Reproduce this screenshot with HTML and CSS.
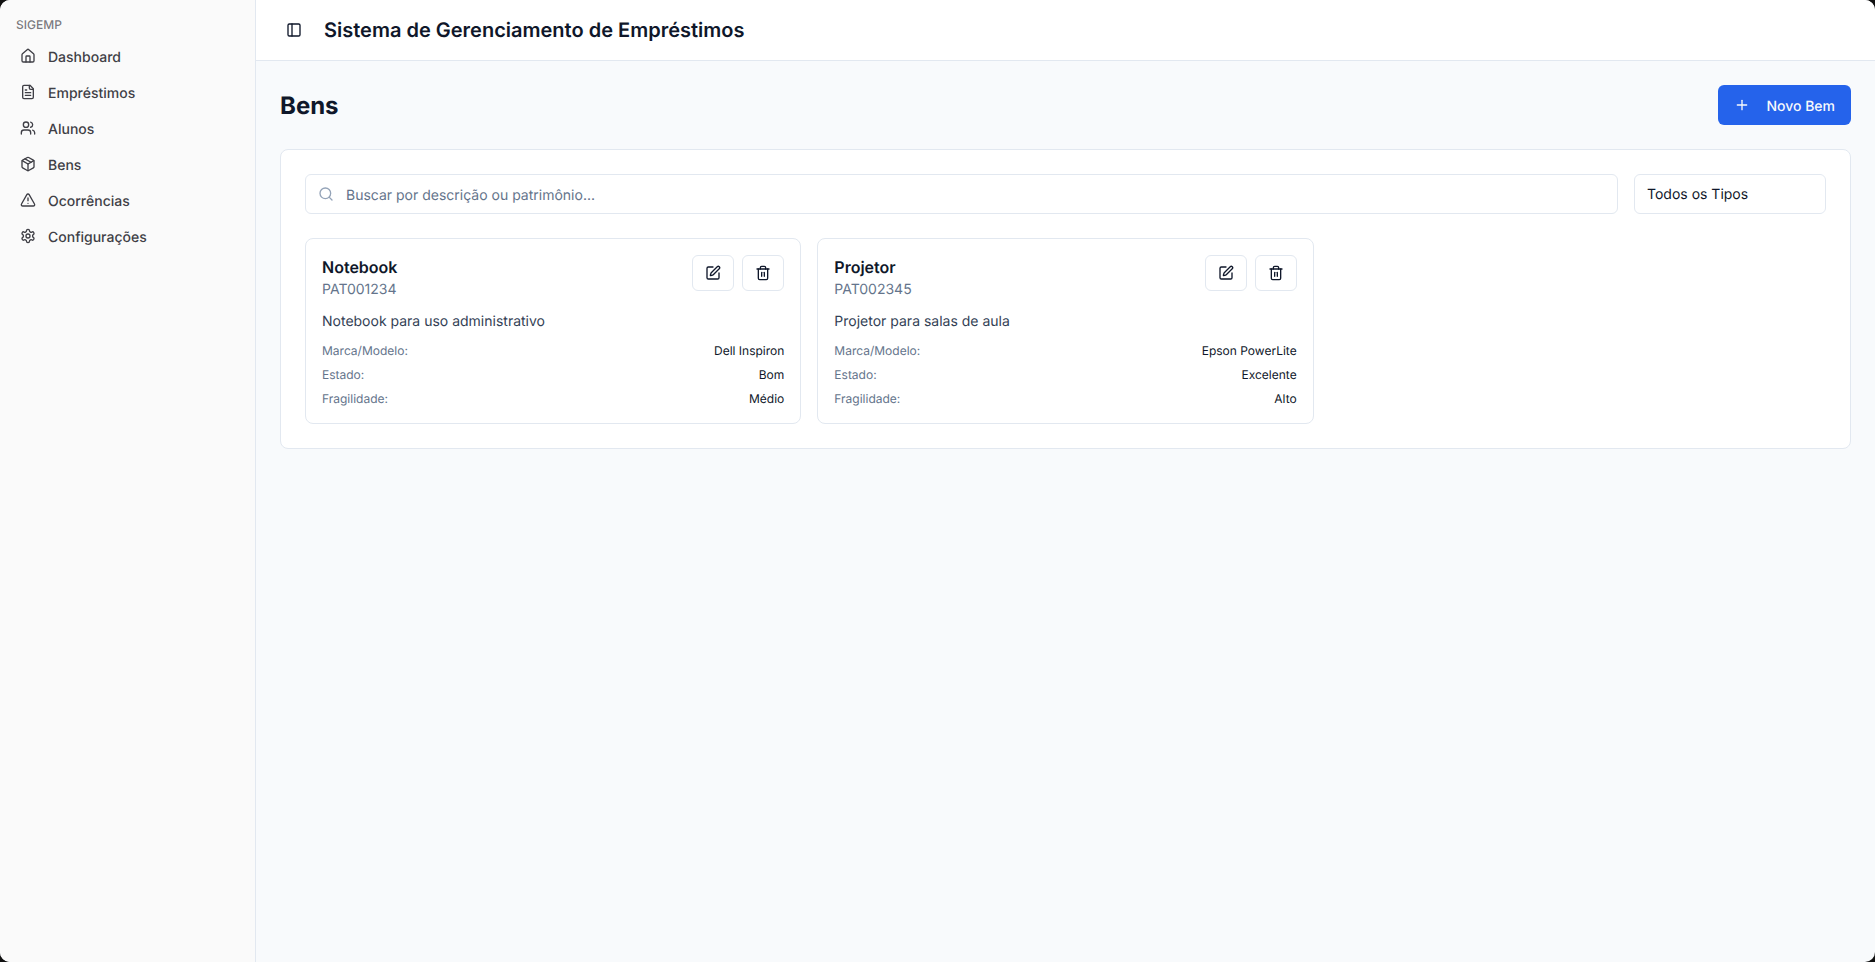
FILE: index.html
```html
<!DOCTYPE html>
<html lang="pt-BR">
<head>
    <meta charset="UTF-8">
    <title>SIGEMP</title>
    <link rel="stylesheet" href="styles.css">
</head>
<body>
    <div class="app">
        <!-- menu lateral -->
        <aside class="sidebar">
            <div class="brand">SIGEMP</div>
            <ul class="menu">
                <li>
                    <svg class="icon" viewBox="0 0 24 24"><path d="M15 21v-8a1 1 0 0 0-1-1h-4a1 1 0 0 0-1 1v8"/><path d="M3 10a2 2 0 0 1 .709-1.528l7-5.999a2 2 0 0 1 2.582 0l7 5.999A2 2 0 0 1 21 10v9a2 2 0 0 1-2 2H5a2 2 0 0 1-2-2z"/></svg>
                    <span>Dashboard</span>
                </li>
                <li>
                    <svg class="icon" viewBox="0 0 24 24"><path d="M15 2H6a2 2 0 0 0-2 2v16a2 2 0 0 0 2 2h12a2 2 0 0 0 2-2V7Z"/><path d="M14 2v4a2 2 0 0 0 2 2h4"/><path d="M10 9H8"/><path d="M16 13H8"/><path d="M16 17H8"/></svg>
                    <span>Empréstimos</span>
                </li>
                <li>
                    <svg class="icon" viewBox="0 0 24 24"><path d="M16 21v-2a4 4 0 0 0-4-4H6a4 4 0 0 0-4 4v2"/><circle cx="9" cy="7" r="4"/><path d="M22 21v-2a4 4 0 0 0-3-3.87"/><path d="M16 3.13a4 4 0 0 1 0 7.75"/></svg>
                    <span>Alunos</span>
                </li>
                <li>
                    <svg class="icon" viewBox="0 0 24 24"><path d="M21 8a2 2 0 0 0-1-1.73l-7-4a2 2 0 0 0-2 0l-7 4A2 2 0 0 0 3 8v8a2 2 0 0 0 1 1.73l7 4a2 2 0 0 0 2 0l7-4A2 2 0 0 0 21 16Z"/><path d="m3.3 7 8.7 5 8.7-5"/><path d="M12 22V12"/><path d="m7.5 4.27 9 5.15"/></svg>
                    <span>Bens</span>
                </li>
                <li>
                    <svg class="icon" viewBox="0 0 24 24"><path d="m21.73 18-8-14a2 2 0 0 0-3.48 0l-8 14A2 2 0 0 0 4 21h16a2 2 0 0 0 1.73-3"/><path d="M12 9v4"/><path d="M12 17h.01"/></svg>
                    <span>Ocorrências</span>
                </li>
                <li>
                    <svg class="icon" viewBox="0 0 24 24"><path d="M12.22 2h-.44a2 2 0 0 0-2 2v.18a2 2 0 0 1-1 1.73l-.43.25a2 2 0 0 1-2 0l-.15-.08a2 2 0 0 0-2.73.73l-.22.38a2 2 0 0 0 .73 2.73l.15.1a2 2 0 0 1 1 1.72v.51a2 2 0 0 1-1 1.74l-.15.09a2 2 0 0 0-.73 2.73l.22.38a2 2 0 0 0 2.73.73l.15-.08a2 2 0 0 1 2 0l.43.25a2 2 0 0 1 1 1.73V20a2 2 0 0 0 2 2h.44a2 2 0 0 0 2-2v-.18a2 2 0 0 1 1-1.73l.43-.25a2 2 0 0 1 2 0l.15.08a2 2 0 0 0 2.73-.73l.22-.39a2 2 0 0 0-.73-2.73l-.15-.08a2 2 0 0 1-1-1.74v-.5a2 2 0 0 1 1-1.74l.15-.09a2 2 0 0 0 .73-2.73l-.22-.38a2 2 0 0 0-2.73-.73l-.15.08a2 2 0 0 1-2 0l-.43-.25a2 2 0 0 1-1-1.73V4a2 2 0 0 0-2-2z"/><circle cx="12" cy="12" r="3"/></svg>
                    <span>Configurações</span>
                </li>
            </ul>
        </aside>

        <div class="content">
            <!-- topo -->
            <header class="topbar">
                <button class="toggle" type="button">
                    <svg class="icon" viewBox="0 0 24 24"><rect width="18" height="18" x="3" y="3" rx="2"/><path d="M9 3v18"/></svg>
                </button>
                <h1 class="app-title">Sistema de Gerenciamento de Empréstimos</h1>
            </header>

            <main class="page">
                <div class="page-head">
                    <h2 class="page-title">Bens</h2>
                    <button class="btn-new" type="button">
                        <svg class="icon" viewBox="0 0 24 24"><path d="M5 12h14"/><path d="M12 5v14"/></svg>
                        <span>Novo Bem</span>
                    </button>
                </div>

                <section class="panel">
                    <div class="filters">
                        <div class="search">
                            <svg class="icon" viewBox="0 0 24 24"><circle cx="11" cy="11" r="8"/><path d="m21 21-4.3-4.3"/></svg>
                            <span>Buscar por descrição ou patrimônio...</span>
                        </div>
                        <div class="type-select">Todos os Tipos</div>
                    </div>

                    <div class="cards">
                        <article class="card">
                            <div class="card-head">
                                <div>
                                    <h3 class="card-name">Notebook</h3>
                                    <p class="card-code">PAT001234</p>
                                </div>
                                <div class="actions">
                                    <button class="btn-icon" type="button">
                                        <svg class="icon" viewBox="0 0 24 24"><path d="M12 3H5a2 2 0 0 0-2 2v14a2 2 0 0 0 2 2h14a2 2 0 0 0 2-2v-7"/><path d="M18.375 2.625a1 1 0 0 1 3 3l-9.013 9.014a2 2 0 0 1-.853.505l-2.873.84a.5.5 0 0 1-.62-.62l.84-2.873a2 2 0 0 1 .506-.852z"/></svg>
                                    </button>
                                    <button class="btn-icon" type="button">
                                        <svg class="icon" viewBox="0 0 24 24"><path d="M3 6h18"/><path d="M19 6v14c0 1-1 2-2 2H7c-1 0-2-1-2-2V6"/><path d="M8 6V4c0-1 1-2 2-2h4c1 0 2 1 2 2v2"/><path d="M10 11v6"/><path d="M14 11v6"/></svg>
                                    </button>
                                </div>
                            </div>
                            <p class="card-desc">Notebook para uso administrativo</p>
                            <dl class="specs">
                                <div class="spec"><dt>Marca/Modelo:</dt><dd>Dell Inspiron</dd></div>
                                <div class="spec"><dt>Estado:</dt><dd>Bom</dd></div>
                                <div class="spec"><dt>Fragilidade:</dt><dd>Médio</dd></div>
                            </dl>
                        </article>

                        <article class="card">
                            <div class="card-head">
                                <div>
                                    <h3 class="card-name">Projetor</h3>
                                    <p class="card-code">PAT002345</p>
                                </div>
                                <div class="actions">
                                    <button class="btn-icon" type="button">
                                        <svg class="icon" viewBox="0 0 24 24"><path d="M12 3H5a2 2 0 0 0-2 2v14a2 2 0 0 0 2 2h14a2 2 0 0 0 2-2v-7"/><path d="M18.375 2.625a1 1 0 0 1 3 3l-9.013 9.014a2 2 0 0 1-.853.505l-2.873.84a.5.5 0 0 1-.62-.62l.84-2.873a2 2 0 0 1 .506-.852z"/></svg>
                                    </button>
                                    <button class="btn-icon" type="button">
                                        <svg class="icon" viewBox="0 0 24 24"><path d="M3 6h18"/><path d="M19 6v14c0 1-1 2-2 2H7c-1 0-2-1-2-2V6"/><path d="M8 6V4c0-1 1-2 2-2h4c1 0 2 1 2 2v2"/><path d="M10 11v6"/><path d="M14 11v6"/></svg>
                                    </button>
                                </div>
                            </div>
                            <p class="card-desc">Projetor para salas de aula</p>
                            <dl class="specs">
                                <div class="spec"><dt>Marca/Modelo:</dt><dd>Epson PowerLite</dd></div>
                                <div class="spec"><dt>Estado:</dt><dd>Excelente</dd></div>
                                <div class="spec"><dt>Fragilidade:</dt><dd>Alto</dd></div>
                            </dl>
                        </article>
                    </div>
                </section>
            </main>
        </div>
    </div>
</body>
</html>
```

FILE: styles.css
```css
* {
    box-sizing: border-box;
}
html, body, h1, h2, h3, p, ul, dl, dd {
    margin: 0;
    padding: 0;
}
html, body {
    height: 100%;
}
body {
    font-family: Inter, "Liberation Sans", sans-serif;
    text-rendering: geometricPrecision;
    color: #0f172a;
    background: #111;
}
button {
    font: inherit;
    text-rendering: inherit;
    cursor: pointer;
}
.icon {
    width: 16px;
    height: 16px;
    flex: none;
    fill: none;
    stroke: currentColor;
    stroke-width: 2;
    stroke-linecap: round;
    stroke-linejoin: round;
}

.app {
    display: flex;
    height: 100%;
    overflow: hidden;
    border-radius: 10px;
    background: #f8fafc;
}

/* menu lateral */
.sidebar {
    width: 256px;
    flex: none;
    padding: 17px 16px 16px;
    background: #fafafa;
    border-right: 1px solid #e2e8f0;
}
.brand {
    height: 21px;
    font-size: 12px;
    line-height: 16px;
    font-weight: 500;
    color: #3f3f46b3;
}
.menu {
    list-style: none;
}
.menu li {
    display: flex;
    align-items: center;
    gap: 12px;
    height: 36px;
    padding: 0 4px;
    font-size: 14px;
    font-weight: 500;
    color: #3f3f46;
}
.menu li span {
    padding-top: 2px;
}

/* topo */
.content {
    flex: 1;
    min-width: 0;
}
.topbar {
    display: flex;
    align-items: center;
    height: 61px;
    padding: 0 24px;
    background: #fff;
    border-bottom: 1px solid #e2e8f0;
}
.toggle {
    display: flex;
    align-items: center;
    justify-content: center;
    width: 28px;
    height: 28px;
    padding: 0;
    border: 0;
    background: none;
    color: #0f172a;
}
.app-title {
    margin-left: 16px;
    font-size: 20px;
    line-height: 28px;
    font-weight: 600;
}

.page {
    padding: 24px;
}
.page-head {
    display: flex;
    align-items: center;
    justify-content: space-between;
    margin-bottom: 24px;
}
.page-title {
    padding-top: 2px;
    font-size: 24px;
    line-height: 32px;
    font-weight: 700;
}
.btn-new {
    display: flex;
    align-items: center;
    gap: 16px;
    height: 40px;
    padding: 0 16px;
    border: 0;
    border-radius: 6px;
    background: #2563eb;
    color: #f8fafc;
    font-size: 14px;
    font-weight: 500;
}
.btn-new span {
    padding-top: 2px;
}

.panel {
    padding: 24px;
    border: 1px solid #e2e8f0;
    border-radius: 8px;
    background: #fff;
}
.filters {
    display: flex;
    gap: 16px;
    margin-bottom: 24px;
}
.search {
    flex: 1;
    display: flex;
    align-items: center;
    gap: 12px;
    height: 40px;
    padding: 0 12px;
    border: 1px solid #e2e8f0;
    border-radius: 6px;
    font-size: 14px;
    color: #64748b;
}
.search span {
    padding-top: 2px;
}
.search .icon {
    color: #94a3b8;
}
.type-select {
    width: 192px;
    height: 40px;
    padding: 0 12px;
    border: 1px solid #e2e8f0;
    border-radius: 6px;
    font-size: 14px;
    line-height: 40px;
    color: #0f172a;
}

.cards {
    display: grid;
    grid-template-columns: repeat(3, 1fr);
    gap: 16px;
}
.card {
    padding: 16px;
    border: 1px solid #e2e8f0;
    border-radius: 8px;
    background: #fff;
}
.card-head {
    display: flex;
    justify-content: space-between;
    align-items: flex-start;
    margin-bottom: 10px;
}
.card-name {
    font-size: 16px;
    line-height: 24px;
    font-weight: 600;
}
.card-code {
    font-size: 14px;
    line-height: 22px;
    color: #64748b;
}
.actions {
    display: flex;
    gap: 8px;
}
.btn-icon {
    display: flex;
    align-items: center;
    justify-content: center;
    width: 42px;
    height: 36px;
    padding: 0;
    border: 1px solid #e2e8f0;
    border-radius: 6px;
    background: #fff;
    color: #0f172a;
}
.card-desc {
    font-size: 14px;
    line-height: 22px;
    color: #334155;
    margin-bottom: 10px;
}
.specs {
    display: flex;
    flex-direction: column;
    gap: 8px;
}
.spec {
    display: flex;
    justify-content: space-between;
    font-size: 12px;
    line-height: 16px;
}
.spec dt {
    color: #64748b;
}
```
